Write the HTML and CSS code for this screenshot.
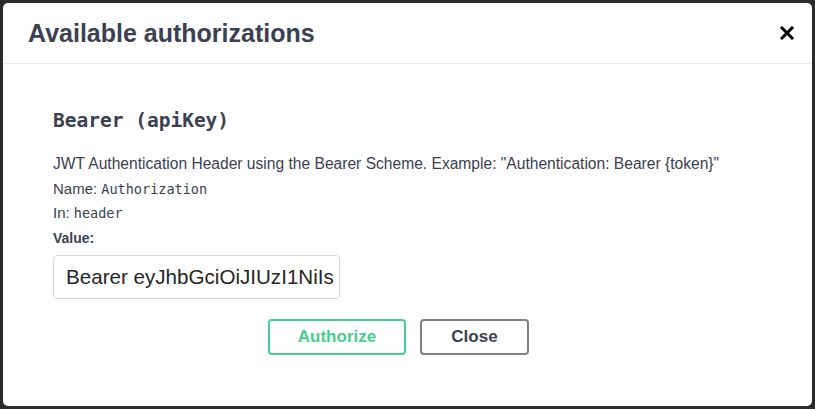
FILE: index.html
```html
<!DOCTYPE html>
<html>
<head>
<meta charset="utf-8">
<link rel="stylesheet" href="styles.css">
</head>
<body>
<div class="modal">
  <div class="modal-header">
    <h3 class="title">Available authorizations</h3>
    <button class="close-x" aria-label="close">
      <svg width="14" height="14" viewBox="0 0 14 14"><path d="M2 2 L12 12 M12 2 L2 12" stroke="#000" stroke-width="3" stroke-linecap="square"/></svg>
    </button>
  </div>
  <div class="modal-body">
    <h4 class="scheme">Bearer (apiKey)</h4>
    <p class="desc">JWT Authentication Header using the Bearer Scheme. Example: "Authentication: Bearer {token}"</p>
    <p class="meta">Name: <code>Authorization</code></p>
    <p class="meta">In: <code>header</code></p>
    <label class="value-label">Value:</label>
    <div class="input">Bearer eyJhbGciOiJIUzI1NiIs</div>
    <div class="btns">
      <button class="btn authorize">Authorize</button>
      <button class="btn close">Close</button>
    </div>
  </div>
</div>
</body>
</html>
```
FILE: styles.css
```css
html, body {
  margin: 0;
  height: 100%;
}
body {
  background: #2b2b2b;
  padding: 3px;
  box-sizing: border-box;
  font-family: "Liberation Sans", Arial, sans-serif;
  color: #3b4151;
}
.modal {
  background: #fff;
  border-radius: 5px;
  height: 100%;
  box-sizing: border-box;
}
.modal-header {
  display: flex;
  align-items: center;
  justify-content: space-between;
  height: 60px;
  padding: 0 18px 0 25px;
  border-bottom: 1px solid #ebebeb;
}
.title {
  margin: 0;
  font-size: 25px;
  font-weight: bold;
  color: #3b4151;
}
.close-x {
  background: none;
  border: 0;
  padding: 0;
  display: flex;
}
.modal-body {
  padding: 45px 50px 0 50px;
}
.scheme {
  margin: 0 0 20px;
  font-family: "DejaVu Sans Mono", monospace;
  font-size: 19.5px;
  font-weight: bold;
  color: #3b4151;
}
.desc, .meta {
  margin: 0;
  font-size: 15.6px;
  line-height: 24.5px;
  height: 24.5px;
  color: #3b4151;
}
.meta {
  font-size: 15px;
}
.meta code {
  font-family: "DejaVu Sans Mono", monospace;
  font-size: 13.5px;
  line-height: 1;
  color: #3b4151;
}
.value-label {
  display: block;
  margin-top: 1px;
  font-size: 14px;
  font-weight: bold;
  line-height: 22px;
}
.input {
  margin-top: 6px;
  width: 287px;
  height: 44px;
  box-sizing: border-box;
  border: 1px solid #d9d9d9;
  border-radius: 4px;
  padding: 0 12px;
  display: flex;
  align-items: center;
  font-size: 20.6px;
  color: #262626;
  white-space: nowrap;
  overflow: hidden;
}
.btns {
  display: flex;
  justify-content: center;
  gap: 14px;
  margin-top: 20px;
  padding-right: 18px;
}
.btn {
  height: 36px;
  box-sizing: border-box;
  border-radius: 4px;
  background: #fff;
  font-family: "Liberation Sans", Arial, sans-serif;
  font-size: 17px;
  font-weight: bold;
  padding: 0;
}
.authorize {
  width: 138px;
  border: 2.5px solid #49cc90;
  color: #49cc90;
}
.close {
  width: 109px;
  border: 2.5px solid #808080;
  color: #3b4151;
}
```
